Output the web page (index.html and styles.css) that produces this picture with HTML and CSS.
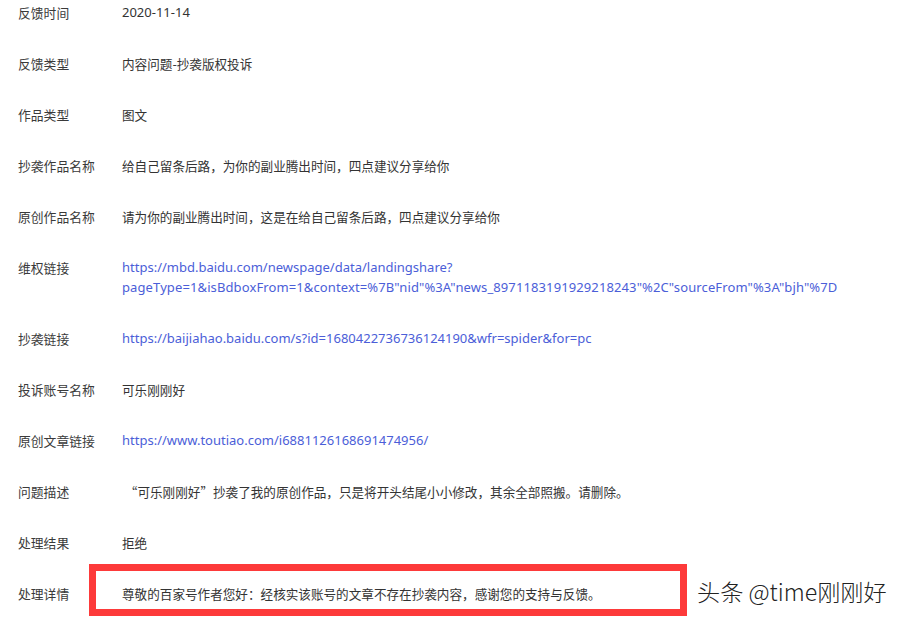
FILE: index.html
```html
<!DOCTYPE html>
<html lang="zh-CN">
<head>
<meta charset="utf-8">
<link rel="stylesheet" href="styles.css">
</head>
<body>
<div class="page">
  <dl class="list">
    <div class="row"><dt>反馈时间</dt><dd><span class="latin">2020-11-14</span></dd></div>
    <div class="row"><dt>反馈类型</dt><dd>内容问题-抄袭版权投诉</dd></div>
    <div class="row"><dt>作品类型</dt><dd>图文</dd></div>
    <div class="row"><dt>抄袭作品名称</dt><dd>给自己留条后路，为你的副业腾出时间，四点建议分享给你</dd></div>
    <div class="row"><dt>原创作品名称</dt><dd>请为你的副业腾出时间，这是在给自己留条后路，四点建议分享给你</dd></div>
    <div class="row"><dt>维权链接</dt><dd><a class="link tall">https://mbd.baidu.com/newspage/data/landingshare?<br><span class="wide">pageType=1&amp;isBdboxFrom=1&amp;context=%7B"nid"%3A"news_8971183191929218243"%2C"sourceFrom"%3A"bjh"%7D</span></a></dd></div>
    <div class="row"><dt>抄袭链接</dt><dd><a class="link">https://baijiahao.baidu.com/s?id=1680422736736124190&amp;wfr=spider&amp;for=pc</a></dd></div>
    <div class="row"><dt>投诉账号名称</dt><dd>可乐刚刚好</dd></div>
    <div class="row"><dt>原创文章链接</dt><dd><a class="link">https://www.toutiao.com/i6881126168691474956/</a></dd></div>
    <div class="row"><dt>问题描述</dt><dd>&nbsp;“可乐刚刚好”抄袭了我的原创作品，只是将开头结尾小小修改，其余全部照搬。请删除。</dd></div>
    <div class="row"><dt>处理结果</dt><dd>拒绝</dd></div>
    <div class="row last"><dt>处理详情</dt><dd class="marked">尊敬的百家号作者您好：经核实该账号的文章不存在抄袭内容，感谢您的支持与反馈。<span class="redbox"></span></dd></div>
  </dl>
  <div class="watermark">头条 @time刚刚好</div>
</div>
</body>
</html>
```

FILE: styles.css
```css
html, body {
  margin: 0;
  padding: 0;
  background: #fff;
}
.page {
  position: relative;
  width: 908px;
  height: 623px;
  overflow: hidden;
  font-family: "Noto Sans CJK SC", "Noto Sans", sans-serif;
  font-size: 12.6px;
  line-height: 19px;
  color: #333;
}
.list {
  margin: 0;
  padding: 3px 0 0 18px;
}
.row {
  display: grid;
  grid-template-columns: 104px 1fr;
  padding-bottom: 32px;
}
.row dt {
  color: #3a3a3a;
  font-size: 12.8px;
}
.row dd {
  margin: 0;
}
.latin {
  display: block;
  font-family: "Noto Sans", sans-serif;
  font-size: 13px;
}
.link {
  display: block;
  font-family: "Noto Sans", sans-serif;
  font-size: 13px;
  color: #4b5ed8;
  text-decoration: none;
}
.link.tall {
  line-height: 19.5px;
}
.wide {
  letter-spacing: 0.11px;
}
.marked {
  position: relative;
}
.redbox {
  position: absolute;
  left: -33px;
  top: -20px;
  width: 584px;
  height: 38px;
  border: 7px solid #fd3a3a;
}
.watermark {
  position: absolute;
  left: 697px;
  top: 576px;
  font-family: "Noto Sans CJK SC", sans-serif;
  font-size: 23.2px;
  font-weight: 300;
  line-height: 30px;
  color: #222;
  text-shadow: 1px 1px 0 #fff, -1px -1px 0 #fff, 1px -1px 0 #fff, -1px 1px 0 #fff;
}
```
